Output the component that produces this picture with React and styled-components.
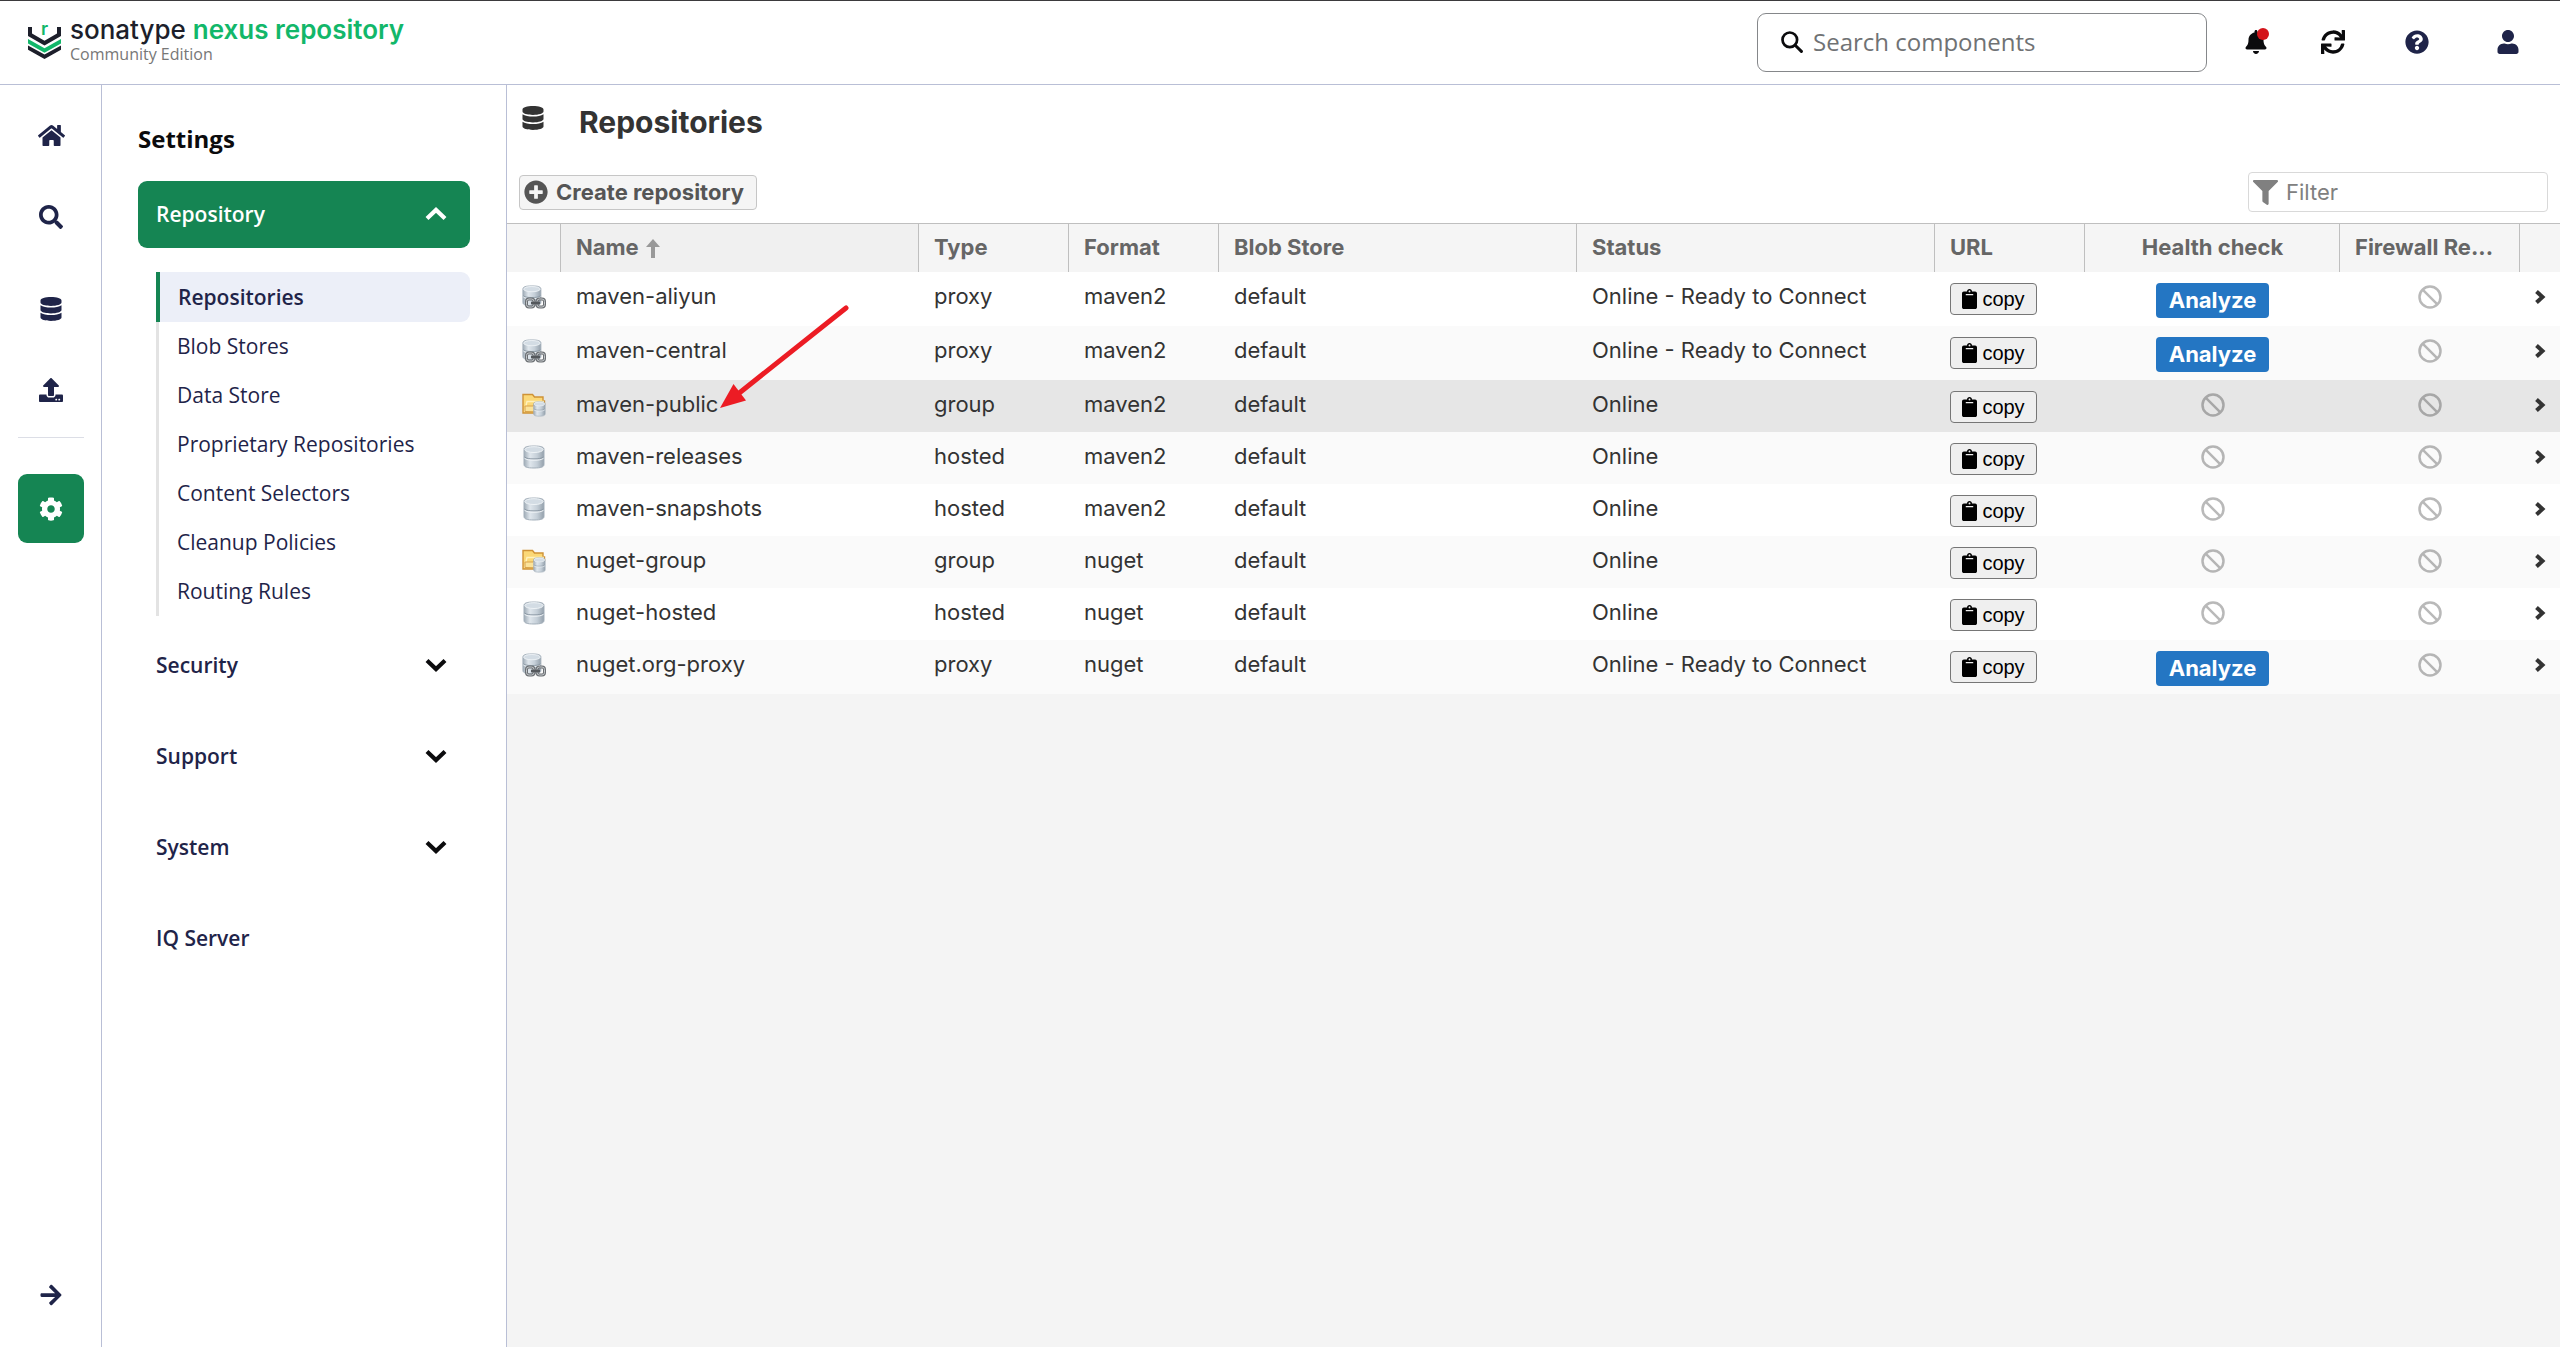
import React, { useState } from "react";
import styled, { createGlobalStyle } from "styled-components";
import {
  FaArrowRight,
  FaBell,
  FaClipboard,
  FaCog,
  FaDatabase,
  FaFilter,
  FaHome,
  FaPlusCircle,
  FaQuestionCircle,
  FaSearch,
  FaSync,
  FaUpload,
  FaUser,
} from "react-icons/fa";

const repositoryLinks = [
  "Repositories",
  "Blob Stores",
  "Data Store",
  "Proprietary Repositories",
  "Content Selectors",
  "Cleanup Policies",
  "Routing Rules",
];

const repositories = [
  { name: "maven-aliyun", type: "proxy", format: "maven2" },
  { name: "maven-central", type: "proxy", format: "maven2" },
  { name: "maven-public", type: "group", format: "maven2" },
  { name: "maven-releases", type: "hosted", format: "maven2" },
  { name: "maven-snapshots", type: "hosted", format: "maven2" },
  { name: "nuget-group", type: "group", format: "nuget" },
  { name: "nuget-hosted", type: "hosted", format: "nuget" },
  { name: "nuget.org-proxy", type: "proxy", format: "nuget" },
];

const Logo = () => (
  <svg width="34" height="46" viewBox="0 -7 34 46" aria-hidden="true">
    <path d="M0 3h4v6.500l12.500 7.300L29 9.500V3h4v9L16.500 21.500 0 12z" fill="#1d1f2b" />
    <path d="M0 15l16.500 9.300L33 15v4.500L16.500 28.800 0 19.500z" fill="#12b76a" />
    <path d="M0 21.500l16.500 9L33 21.500v4.300l-16.500 9.200L0 25.800z" fill="#1d1f2b" />
    <text x="13" y="11" fontFamily="Inter, sans-serif" fontSize="18" fontWeight="600" fill="#12b76a">
      r
    </text>
  </svg>
);

const SearchIcon = () => (
  <svg width="22" height="22" viewBox="0 0 22 22" aria-hidden="true">
    <g fill="none" stroke="currentColor" strokeLinecap="round">
      <circle cx="8.800" cy="8.800" r="7.300" strokeWidth="2.700" />
      <path d="M14.200 14.200l6.200 6.200" strokeWidth="3" />
    </g>
  </svg>
);

const Chevron = ({ up }) => (
  <svg width="22" height="14" viewBox="0 0 22 14" aria-hidden="true">
    <path
      d={up ? "M2 11.500l9-8.500 9 8.500" : "M2 2.500l9 8.500 9-8.500"}
      fill="none"
      stroke="currentColor"
      strokeWidth="4.200"
    />
  </svg>
);

const Ban = () => (
  <BanIcon viewBox="0 0 24 24" role="img" aria-label="Not available">
    <circle cx="12" cy="12" r="10.500" />
    <path d="M4.600 4.600l14.800 14.800" />
  </BanIcon>
);

const Cylinder = ({ id }) => (
  <>
    <defs>
      <linearGradient id={id} x1="0" x2="1" y1="0" y2="0">
        <stop offset="0" stopColor="#9fabb6" />
        <stop offset="0.300" stopColor="#dfe6ec" />
        <stop offset="0.650" stopColor="#c5cfd8" />
        <stop offset="1" stopColor="#94a0ab" />
      </linearGradient>
    </defs>
    <path
      d="M1 4.500C1 2 4 1 11 1s10 1 10 3.500v15c0 2.500-3 3.500-10 3.500S1 22 1 19.500z"
      fill={`url(#${id})`}
      stroke="#a3afba"
    />
    <ellipse cx="11" cy="4.600" rx="9.200" ry="2.900" fill="#d3dce4" stroke="#eef3f6" />
    <path d="M1.500 12c2 1.600 5 1.900 9.500 1.900s7.500-.3 9.500-1.900" fill="none" stroke="#8a97a3" />
    <path d="M1.500 13.300c2 1.600 5 1.900 9.500 1.900s7.500-.3 9.500-1.900" fill="none" stroke="#f1f5f8" />
  </>
);

const TypeIcon = ({ type, name }) => {
  const id = `disk-${name}`;

  if (type === "hosted") {
    return (
      <RowIcon viewBox="-1 0 24 24" role="img" aria-label={type}>
        <Cylinder id={id} />
      </RowIcon>
    );
  }

  if (type === "proxy") {
    return (
      <RowIcon viewBox="0 0 24 24" role="img" aria-label={type}>
        <g transform="scale(0.9)">
          <Cylinder id={id} />
        </g>
        <g fill="none">
          <rect x="4.500" y="14" width="7.500" height="8" rx="2.500" stroke="#6b6f73" strokeWidth="3" />
          <rect x="15" y="14" width="7.500" height="8" rx="2.500" stroke="#6b6f73" strokeWidth="3" />
          <rect x="4.500" y="14" width="7.500" height="8" rx="2.500" stroke="#c3c7ca" />
          <rect x="15" y="14" width="7.500" height="8" rx="2.500" stroke="#c3c7ca" />
          <path d="M9 18h9" stroke="#54585c" strokeWidth="2.600" />
        </g>
      </RowIcon>
    );
  }

  return (
    <RowIcon viewBox="0 0 24 24" role="img" aria-label={type}>
      <path
        d="M1 20V1.500h9.500L12.500 4H21v4h1.500v4L20 20z"
        fill="#fbd877"
        stroke="#cf9236"
        strokeWidth="1.400"
      />
      <path d="M2.500 18.500L5 8.500h17" fill="none" stroke="#fff1bd" strokeWidth="1.400" />
      <path d="M3 18.500V13h8l2-2.500h9V19z" fill="#fbe39a" stroke="#d9a24a" />
      <g transform="translate(11 8) scale(0.58 0.66)">
        <Cylinder id={id} />
      </g>
    </RowIcon>
  );
};

const App = () => {
  const [filter, setFilter] = useState("");
  const [open, setOpen] = useState("Repository");

  const onToggle = (name) => () => {
    setOpen(open === name ? "" : name);
  };

  const isRows = () => {
    return repositories
      .filter((value) => value.name.includes(filter))
      .map((value) => (
        <Row key={value.name} $selected={value.name === "maven-public"}>
          <IconCell>
            <TypeIcon type={value.type} name={value.name} />
          </IconCell>
          <Cell>{value.name}</Cell>
          <Cell>{value.type}</Cell>
          <Cell>{value.format}</Cell>
          <Cell>default</Cell>
          <Cell>{value.type === "proxy" ? "Online - Ready to Connect" : "Online"}</Cell>
          <ButtonCell>
            <CopyButton type="button">
              <FaClipboard />
              copy
            </CopyButton>
          </ButtonCell>
          {value.type === "proxy" ? (
            <ButtonCell>
              <AnalyzeButton type="button">Analyze</AnalyzeButton>
            </ButtonCell>
          ) : (
            <IconCell>
              <Ban />
            </IconCell>
          )}
          <IconCell>
            <Ban />
          </IconCell>
          <IconCell>
            <OpenButton type="button" aria-label={`Open ${value.name}`}>
              <svg width="12" height="16" viewBox="0 0 12 16" aria-hidden="true">
                <path d="M2.500 2.500L8.500 8l-6 5.500" fill="none" stroke="currentColor" strokeWidth="4" />
              </svg>
            </OpenButton>
          </IconCell>
        </Row>
      ));
  };

  return (
    <>
      <GlobalStyle />
      <Page>
        <Header>
          <Brand href="#">
            <Logo />
            <div>
              <BrandName>
                sonatype <span>nexus repository</span>
              </BrandName>
              <Edition>Community Edition</Edition>
            </div>
          </Brand>
          <SearchBox>
            <SearchIcon />
            <input type="search" aria-label="Search components" placeholder="Search components" />
          </SearchBox>
          <HeaderTools>
            <ToolButton type="button" aria-label="Notifications" $color="#0b0b0d">
              <FaBell size={24} />
              <Badge />
            </ToolButton>
            <ToolButton type="button" aria-label="Refresh" $color="#0b0b0d">
              <FaSync size={24} />
            </ToolButton>
            <ToolButton type="button" aria-label="Help">
              <FaQuestionCircle size={24} />
            </ToolButton>
            <ToolButton type="button" aria-label="Account">
              <FaUser size={24} />
            </ToolButton>
          </HeaderTools>
        </Header>

        <Body>
          <Rail aria-label="Main">
            <RailGroup>
              <RailLink href="#" aria-label="Home">
                <FaHome size={27} />
              </RailLink>
              <RailLink href="#" aria-label="Search">
                <FaSearch size={24} />
              </RailLink>
            </RailGroup>
            <RailGroup>
              <RailLink href="#" aria-label="Browse">
                <FaDatabase size={24} />
              </RailLink>
              <RailLink href="#" aria-label="Upload">
                <FaUpload size={24} />
              </RailLink>
            </RailGroup>
            <RailDivider />
            <RailLink href="#" aria-label="Settings" $active>
              <FaCog size={24} />
            </RailLink>
            <ExpandButton type="button" aria-label="Expand">
              <FaArrowRight size={24} />
            </ExpandButton>
          </Rail>

          <Sidebar>
            <h2>Settings</h2>
            <SectionButton
              type="button"
              $active={open === "Repository"}
              aria-expanded={open === "Repository"}
              onClick={onToggle("Repository")}
            >
              Repository
              <Chevron up={open === "Repository"} />
            </SectionButton>
            {open === "Repository" && (
              <SubMenu>
                {repositoryLinks.map((value, index) => (
                  <li key={value}>
                    <SubLink href="#" $active={index === 0}>
                      {value}
                    </SubLink>
                  </li>
                ))}
              </SubMenu>
            )}
            {["Security", "Support", "System"].map((value) => (
              <SectionButton
                type="button"
                key={value}
                $active={open === value}
                aria-expanded={open === value}
                onClick={onToggle(value)}
              >
                {value}
                <Chevron up={open === value} />
              </SectionButton>
            ))}
            <SectionButton type="button">IQ Server</SectionButton>
          </Sidebar>

          <Main>
            <Top>
              <Title>
                <FaDatabase size={24} />
                <h1>Repositories</h1>
              </Title>
              <Toolbar>
                <CreateButton type="button">
                  <FaPlusCircle size={24} />
                  Create repository
                </CreateButton>
                <FilterBox>
                  <FaFilter size={25} />
                  <input
                    type="text"
                    aria-label="Filter"
                    placeholder="Filter"
                    value={filter}
                    onChange={(e) => setFilter(e.target.value)}
                  />
                </FilterBox>
              </Toolbar>
            </Top>
            <TableWrap>
              <Table>
                <colgroup>
                  <Col $width={54} />
                  <Col />
                  <Col $width={150} />
                  <Col $width={150} />
                  <Col />
                  <Col />
                  <Col $width={150} />
                  <Col $width={255} />
                  <Col $width={180} />
                  <Col $width={40} />
                </colgroup>
                <thead>
                  <tr>
                    <HeadCell />
                    <HeadCell $sorted aria-sort="ascending">
                      Name
                      <svg width="14" height="19" viewBox="0 0 14 19" aria-hidden="true">
                        <path d="M7 0l7 8H9v11H5V8H0z" fill="#999" />
                      </svg>
                    </HeadCell>
                    <HeadCell>Type</HeadCell>
                    <HeadCell>Format</HeadCell>
                    <HeadCell>Blob Store</HeadCell>
                    <HeadCell>Status</HeadCell>
                    <HeadCell>URL</HeadCell>
                    <HeadCell $center>Health check</HeadCell>
                    <HeadCell>Firewall Re...</HeadCell>
                    <HeadCell />
                  </tr>
                </thead>
                <tbody>{isRows()}</tbody>
              </Table>
              <Pointer viewBox="0 0 132 108" aria-hidden="true">
                <path d="M128 4L20 90" stroke="#ec1c24" strokeWidth="5" strokeLinecap="round" />
                <path d="M2 104l13.500-24L28 96.500z" fill="#ec1c24" />
              </Pointer>
            </TableWrap>
          </Main>
        </Body>
      </Page>
    </>
  );
};

export default App;

const GlobalStyle = createGlobalStyle`
  * {
    box-sizing: border-box;
  }

  body {
    margin: 0;
    font-family: "Open Sans", sans-serif;
    color: #1f2449;
    background-color: #fff;
  }

  button,
  input {
    font: inherit;
    color: inherit;
  }

  button {
    cursor: pointer;
  }

  svg {
    flex-shrink: 0;
  }
`;

const Page = styled.div`
  display: flex;
  flex-direction: column;
  min-height: 100vh;
  border-top: 1px solid #3b3a3d;
`;

const Header = styled.header`
  display: flex;
  align-items: center;
  height: 84px;
  padding-bottom: 1px;
  border-bottom: 1px solid #b9bfd6;
`;

const Brand = styled.a`
  display: flex;
  align-items: center;
  gap: 8px;
  margin-right: auto;
  padding: 0 0 5px 28px;
  color: #1d1f2b;
  text-decoration: none;
`;

const BrandName = styled.div`
  font: 500 26px/28px Inter, sans-serif;

  & > span {
    font-weight: 600;
    color: #12b76a;
  }
`;

const Edition = styled.div`
  font-size: 16px;
  line-height: 20px;
  color: #777;
`;

const SearchBox = styled.label`
  display: flex;
  align-items: center;
  gap: 10px;
  width: 450px;
  height: 59px;
  margin-right: 18px;
  padding: 0 23px;
  border: 1px solid #85878a;
  border-radius: 9px;
  color: #0b0b0d;

  & > input {
    flex: 1;
    min-width: 0;
    padding: 0;
    border: 0;
    outline: 0;
    background: none;
    font-size: 24px;
    line-height: 32px;
  }

  & > input::placeholder {
    color: #707274;
  }
`;

const HeaderTools = styled.div`
  display: grid;
  grid-template-columns: 62px 92px 76px 105px;
`;

const ToolButton = styled.button`
  position: relative;
  display: flex;
  align-items: center;
  justify-content: center;
  height: 60px;
  padding: 0;
  border: 0;
  background: none;
  color: ${(props) => props.$color || "#1f2449"};
`;

const Badge = styled.span`
  position: absolute;
  top: 16px;
  right: 18px;
  width: 12px;
  height: 12px;
  border-radius: 50%;
  background-color: #d3141a;
`;

const Body = styled.div`
  display: flex;
  flex: 1;
`;

const Rail = styled.nav`
  display: flex;
  flex-direction: column;
  flex-shrink: 0;
  width: 102px;
  padding: 16px 17px 18px 18px;
  border-right: 1px solid #b9bfd6;
`;

const RailGroup = styled.div`
  display: flex;
  flex-direction: column;
  gap: 12px;

  & + & {
    margin-top: 23px;
  }
`;

const RailLink = styled.a`
  display: flex;
  align-items: center;
  justify-content: center;
  height: 69px;
  border-radius: 9px;
  color: ${(props) => (props.$active ? "#fff" : "#1f2449")};
  background-color: ${(props) => (props.$active ? "#158553" : "transparent")};
`;

const RailDivider = styled.hr`
  width: 100%;
  margin: 13px 0 36px;
  border: 0;
  border-top: 1px solid #dcdee6;
`;

const ExpandButton = styled.button`
  display: flex;
  align-items: center;
  justify-content: center;
  height: 69px;
  margin-top: auto;
  padding: 0;
  border: 0;
  background: none;
`;

const Sidebar = styled.aside`
  flex-shrink: 0;
  width: 405px;
  padding: 36px 36px 0;
  border-right: 1px solid #b9bfd6;

  & > h2 {
    margin: 0 0 24px;
    font-size: 24px;
    font-weight: 700;
    line-height: 36px;
    color: #0b0b0d;
  }
`;

const SectionButton = styled.button`
  display: flex;
  align-items: center;
  justify-content: space-between;
  width: 100%;
  height: 67px;
  margin-bottom: 24px;
  padding: 0 23px 1px 18px;
  border: 0;
  border-radius: 9px;
  font-size: 21px;
  font-weight: 600;
  text-align: left;
  color: ${(props) => (props.$active ? "#fff" : "#1f2449")};
  background-color: ${(props) => (props.$active ? "#158553" : "transparent")};

  & > svg {
    color: ${(props) => (props.$active ? "#fff" : "#0b0b0d")};
  }
`;

const SubMenu = styled.ul`
  margin: 0 0 16px 18px;
  padding: 0;
  list-style: none;
`;

const SubLink = styled.a`
  display: block;
  padding: 9px 18px;
  border-left: ${(props) => (props.$active ? "4px solid #158553" : "3px solid #e3e3e3")};
  border-radius: ${(props) => (props.$active ? "0 9px 9px 0" : 0)};
  font-size: 21px;
  font-weight: ${(props) => (props.$active ? 600 : 400)};
  line-height: ${(props) => (props.$active ? 32 : 31)}px;
  color: #1f2449;
  text-decoration: none;
  background-color: ${(props) => (props.$active ? "#eceff8" : "transparent")};
`;

const Main = styled.main`
  flex: 1;
  min-width: 0;
  background-color: #f4f4f4;
  font-family: Inter, sans-serif;
  font-size: 22px;
  line-height: 24px;
  color: #333;
`;

const Top = styled.div`
  padding: 15px 12px 11px;
  background-color: #fff;
`;

const Title = styled.div`
  display: flex;
  gap: 34px;
  padding: 6px 0 0 2px;

  & > h1 {
    margin: 0;
    font-size: 30px;
    font-weight: 700;
    line-height: 32px;
  }
`;

const Toolbar = styled.div`
  display: flex;
  align-items: center;
  justify-content: space-between;
  margin-top: 34px;
`;

const CreateButton = styled.button`
  display: flex;
  align-items: center;
  gap: 8px;
  height: 35px;
  padding: 0 12px 0 4px;
  border: 1px solid #c6c6c6;
  border-radius: 4px;
  background-color: #f5f5f5;
  font-weight: 700;
  color: #555;
`;

const FilterBox = styled.label`
  display: flex;
  align-items: center;
  gap: 8px;
  width: 300px;
  height: 40px;
  padding: 0 4px;
  border: 1px solid #d9d9d9;
  border-radius: 4px;
  color: #808080;

  & > input {
    flex: 1;
    min-width: 0;
    padding: 0;
    border: 0;
    outline: 0;
    background: none;
  }

  & > input::placeholder {
    color: #808080;
  }
`;

const TableWrap = styled.div`
  position: relative;
`;

const Table = styled.table`
  width: 100%;
  table-layout: fixed;
  border-collapse: separate;
  border-spacing: 0;
`;

const Col = styled.col`
  width: ${(props) => (props.$width ? `${props.$width}px` : "auto")};
`;

const HeadCell = styled.th`
  height: 49px;
  padding: 0 14px 2px 15px;
  border-top: 1px solid #bfbfbf;
  border-right: 1px solid #bfbfbf;
  background-color: ${(props) => (props.$sorted ? "#f0f0f0" : "#f5f5f5")};
  font-weight: 700;
  text-align: ${(props) => (props.$center ? "center" : "left")};
  white-space: nowrap;
  overflow: hidden;
  color: #666;

  &:last-child {
    border-right: 0;
  }

  & > svg {
    margin-left: 7px;
    vertical-align: -3px;
  }
`;

const Row = styled.tr`
  background-color: #fff;

  &:nth-child(even) {
    background-color: #fafafa;
  }

  &&:nth-child(n) {
    ${(props) => props.$selected && "background-color: #e6e6e6;"}
  }
`;

const Cell = styled.td`
  padding: 12px 15px 0;
  vertical-align: top;
  white-space: nowrap;
`;

const ButtonCell = styled.td`
  padding: 11px 15px 8px;
  vertical-align: top;
`;

const IconCell = styled.td`
  padding: 13px 0 0;
  vertical-align: top;

  & > * {
    display: block;
    margin: 0 auto;
  }
`;

const RowIcon = styled.svg`
  width: 24px;
  height: 24px;
`;

const BanIcon = styled.svg`
  width: 24px;
  height: 24px;
  fill: none;
  stroke: #000;
  stroke-width: 2.5px;
  opacity: 0.27;
`;

const CopyButton = styled.button`
  display: flex;
  align-items: center;
  justify-content: center;
  gap: 5px;
  width: 87px;
  height: 32px;
  margin-bottom: 1px;
  padding: 0;
  border: 1px solid #767676;
  border-radius: 4px;
  background-color: #efefef;
  font: 20px/24px "Liberation Sans", Arial, sans-serif;
  color: #000;

  & > svg {
    width: 15px;
    height: 20px;
  }
`;

const AnalyzeButton = styled.button`
  display: block;
  width: 113px;
  height: 35px;
  margin: 0 auto;
  padding: 0 0 2px;
  border: 0;
  border-radius: 4px;
  background-color: #2476c3;
  font-weight: 700;
  color: #fff;
`;

const OpenButton = styled.button`
  display: flex;
  align-items: center;
  height: 24px;
  padding: 0;
  border: 0;
  background: none;
`;

const Pointer = styled.svg`
  position: absolute;
  top: 81px;
  left: 211px;
  width: 132px;
  height: 108px;
  pointer-events: none;
`;
